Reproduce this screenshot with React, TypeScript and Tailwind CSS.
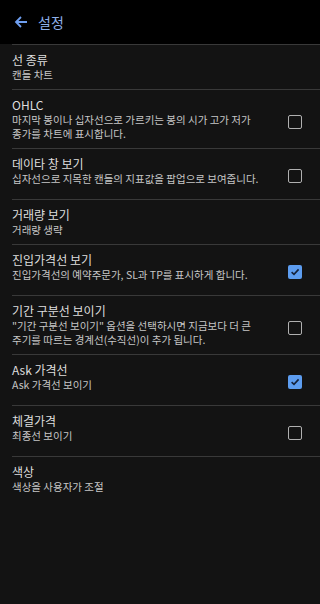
const FONT = "font-['Noto_Sans_CJK_KR','Noto_Sans',sans-serif]";

type Row = {
  title: string;
  desc: string[];
  check?: boolean;
};

const rows: Row[] = [
  { title: "선 종류", desc: ["캔들 차트"] },
  {
    title: "OHLC",
    desc: ["마지막 봉이나 십자선으로 가르키는 봉의 시가 고가 저가", "종가를 차트에 표시합니다."],
    check: false,
  },
  { title: "데이타 창 보기", desc: ["십자선으로 지목한 캔들의 지표값을 팝업으로 보여줍니다."], check: false },
  { title: "거래량 보기", desc: ["거래량 생략"] },
  { title: "진입가격선 보기", desc: ["진입가격선의 예약주문가, SL과 TP를 표시하게 합니다."], check: true },
  {
    title: "기간 구분선 보이기",
    desc: ['"기간 구분선 보이기" 옵션을 선택하시면 지금보다 더 큰', "주기를 따르는 경계선(수직선)이 추가 됩니다."],
    check: false,
  },
  { title: "Ask 가격선", desc: ["Ask 가격선 보이기"], check: true },
  { title: "체결가격", desc: ["최종선 보이기"], check: false },
  { title: "색상", desc: ["색상을 사용자가 조절"] },
];

function CheckBox({ on }: { on: boolean }) {
  if (on) {
    return (
      <div className="flex h-[14px] w-[14px] items-center justify-center rounded-[2px] bg-[#5d9df0]">
        <svg width="10" height="10" viewBox="0 0 10 10">
          <path d="M1.6 5.2 L4 7.4 L8.6 2.4" fill="none" stroke="#14213a" strokeWidth="1.6" />
        </svg>
      </div>
    );
  }
  return <div className="h-[14px] w-[14px] rounded-[2px] border-[1.5px] border-[#b0b0b0]" />;
}

export default function App() {
  return (
    <div className={`h-[604px] w-[320px] overflow-hidden bg-[#131313] ${FONT}`}>
      <div className="flex h-[44px] items-center bg-black pl-[14px]">
        <svg width="14" height="14" viewBox="0 0 14 14">
          <path d="M13 7 H2 M7 2 L2 7 L7 12" fill="none" stroke="#6f9ff0" strokeWidth="1.8" />
        </svg>
        <span className="ml-[10px] text-[14px] font-normal text-[#8fb1ea]">설정</span>
      </div>

      <div>
        {rows.map((r) => (
          <div key={r.title} className="ml-3 border-t border-[#393939]">
            <div
              className={`flex items-start pt-[7px] pb-[7px] pr-[18px] ${
                r.check !== undefined ? "min-h-[50px]" : ""
              }`}
            >
              <div className="flex-1">
                <div className="text-[12px] font-normal leading-4 text-[#dedede]">{r.title}</div>
                {r.desc.map((d) => (
                  <div key={d} className="text-[10.5px] leading-[14px] text-[#c6c6c6]">
                    {d}
                  </div>
                ))}
              </div>
              {r.check !== undefined && (
                <div className={`self-center ${r.desc.length > 1 ? "mt-[6px]" : "mt-[4px]"}`}>
                  <CheckBox on={r.check} />
                </div>
              )}
            </div>
          </div>
        ))}
      </div>
    </div>
  );
}
